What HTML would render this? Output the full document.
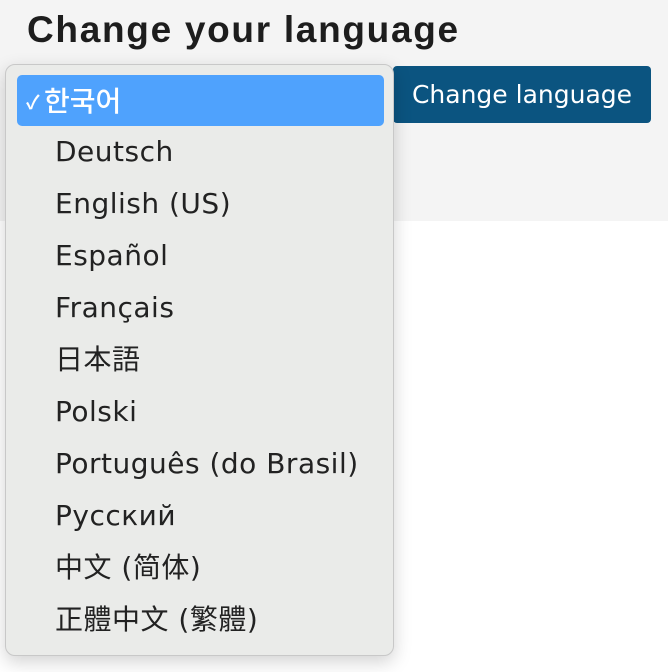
<!DOCTYPE html>
<html><head><meta charset="utf-8"><style>
body{margin:0;width:668px;height:672px;background:#fff;position:relative;overflow:hidden;font-family:"Liberation Sans","Noto Sans CJK KR",sans-serif}
.top{position:absolute;left:0;top:0;width:668px;height:221px;background:#f4f4f4}
h1{position:absolute;left:27px;top:9px;margin:0;font-size:37px;letter-spacing:1.7px;font-weight:bold;color:#1d1d1d}
.btn{position:absolute;left:393px;top:66px;width:258px;height:57px;background:#0b5480;color:#fff;border-radius:4px;font-size:25px;font-family:"DejaVu Sans",sans-serif;line-height:57px;text-align:center}
.dd{position:absolute;left:5px;top:64px;width:389px;height:592px;background:#eaebe9;border:1px solid #c8c8c8;border-radius:10px;box-shadow:0 6px 18px rgba(0,0,0,.18);box-sizing:border-box}
.it{position:absolute;left:49px;height:52px;line-height:52px;font-size:28px;letter-spacing:0.5px;color:#222;font-family:"DejaVu Sans","Noto Sans CJK JP",sans-serif}
.sel{position:absolute;left:11px;top:10px;width:367px;height:51px;background:#4fa2fd;border-radius:5px;color:#fff;font-size:28px;line-height:51px}
.sel span{position:absolute;left:9px;top:3px;font-size:19px;font-weight:bold}
.sel b{position:absolute;left:27px;font-weight:500;font-family:"Noto Sans CJK KR",sans-serif}
</style></head><body>
<div class="top"></div>
<h1>Change your language</h1>
<div class="btn">Change language</div>
<div class="dd">
<div class="sel"><span>✓</span><b>한국어</b></div>
<div class="it" style="top:61px">Deutsch</div>
<div class="it" style="top:113px">English (US)</div>
<div class="it" style="top:165px">Español</div>
<div class="it" style="top:217px">Français</div>
<div class="it" style="top:269px">日本語</div>
<div class="it" style="top:321px">Polski</div>
<div class="it" style="top:373px">Português (do Brasil)</div>
<div class="it" style="top:425px">Русский</div>
<div class="it" style="top:477px;font-family:'DejaVu Sans','Noto Sans CJK SC',sans-serif">中文 (简体)</div>
<div class="it" style="top:529px;font-family:'DejaVu Sans','Noto Sans CJK TC',sans-serif">正體中文 (繁體)</div>
</div>
</body></html>
